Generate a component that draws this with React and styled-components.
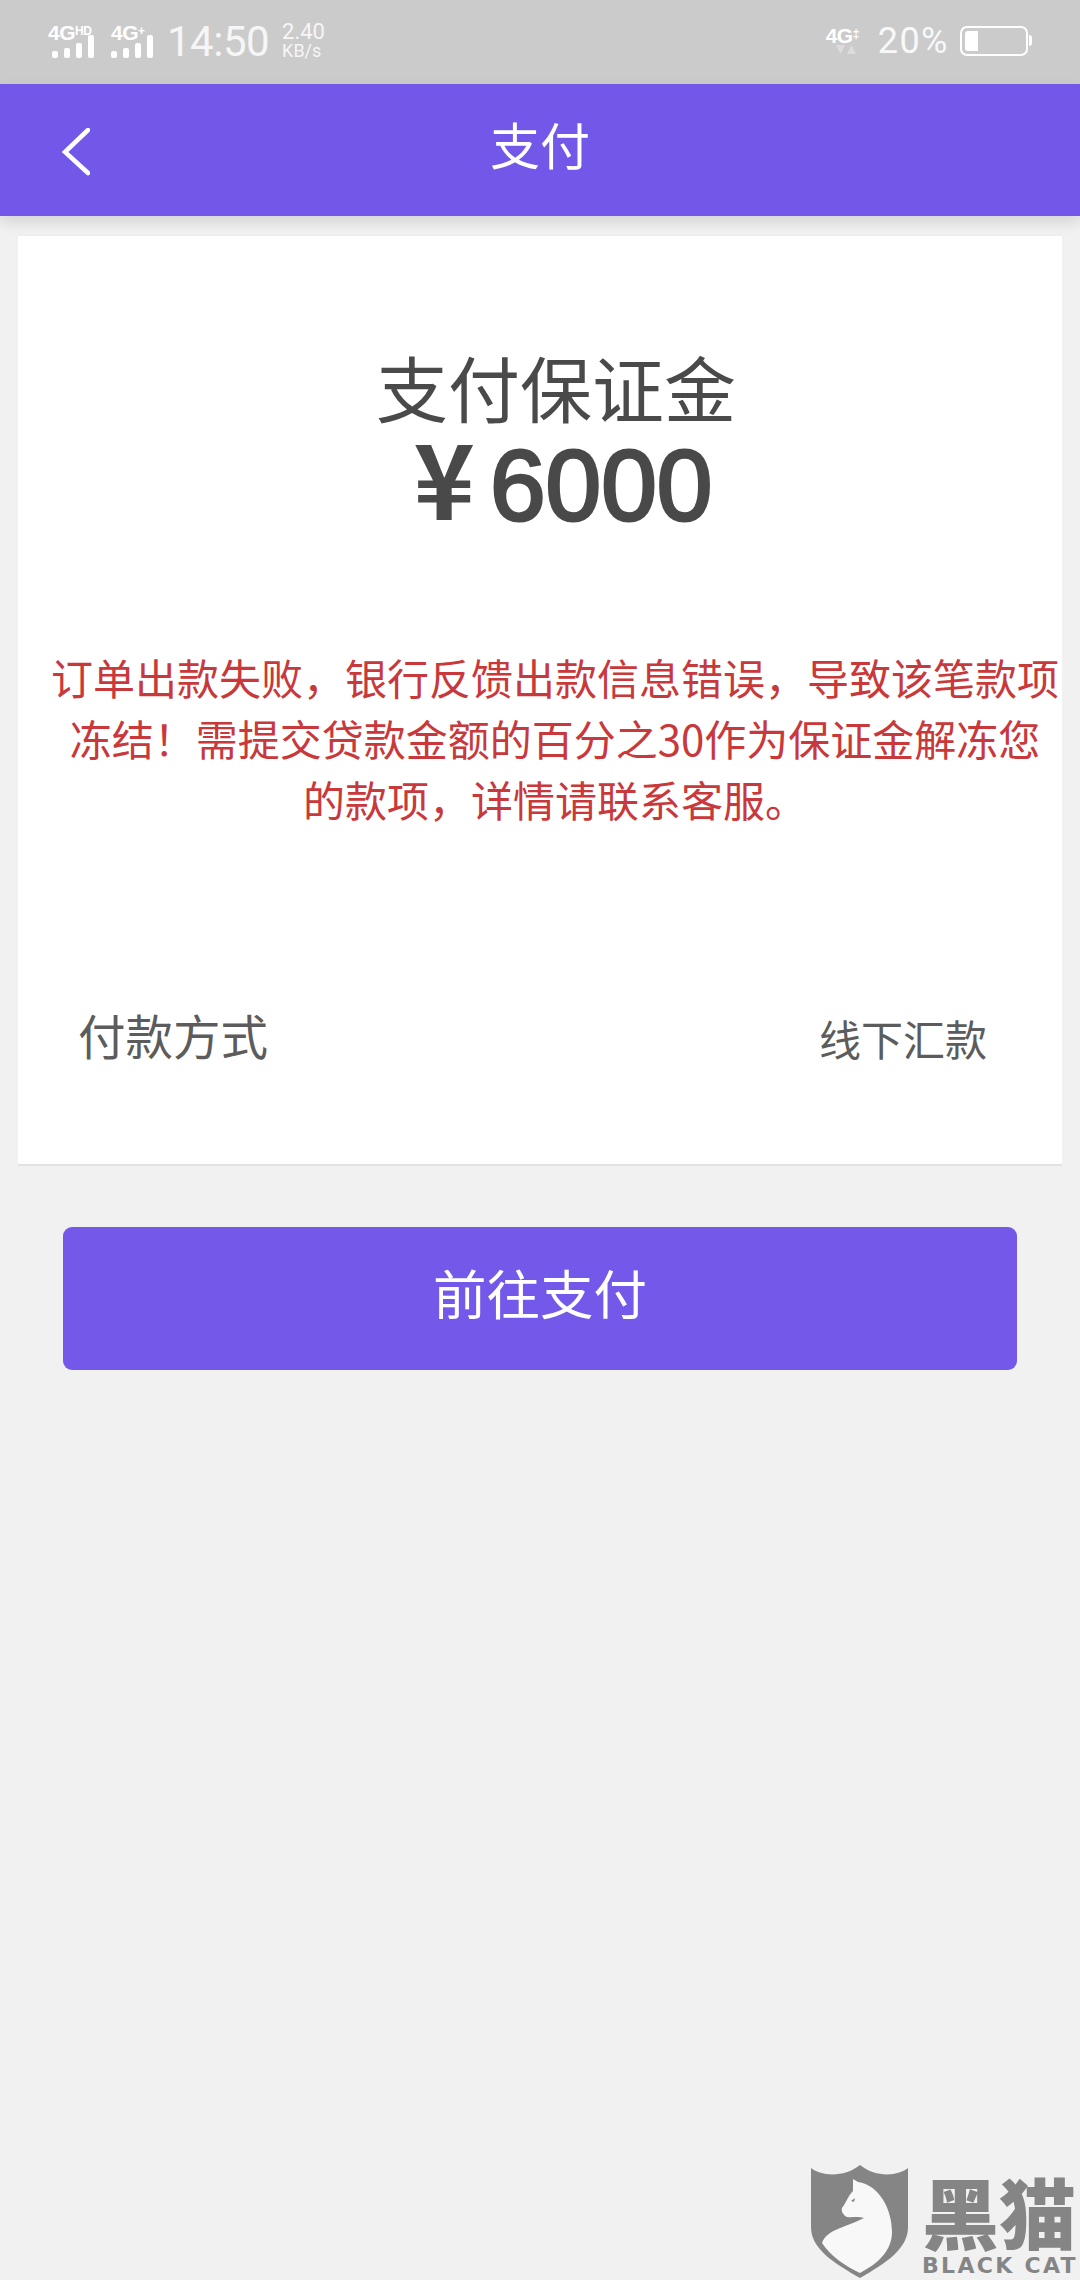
import React from "react";
import styled, { createGlobalStyle } from "styled-components";

const sans = `Roboto, "Liberation Sans", "Noto Sans CJK SC", sans-serif`;
const cjk = `"Noto Sans CJK SC", "Liberation Sans", sans-serif`;

const Global = createGlobalStyle`
  html, body {
    margin: 0;
    padding: 0;
    background: #f1f1f1;
  }
`;

const Page = styled.div`
  position: relative;
  width: 1080px;
  height: 2280px;
  overflow: hidden;
  background: #f1f1f1;
  font-family: ${cjk};
  text-spacing-trim: space-all;
`;

const StatusBar = styled.div`
  height: 84px;
  box-sizing: border-box;
  padding: 0 52px 2px 48px;
  background: #cbcbcb;
  color: #fff;
  display: flex;
  align-items: center;
  font-family: ${sans};
`;

const Signal = styled.div`
  display: flex;
  flex-direction: column;
  align-items: flex-start;
  width: ${(p) => p.$width}px;
  & svg {
    margin-left: ${(p) => p.$indent || 0}px;
  }
`;

const NetLabel = styled.span`
  font-family: "Liberation Sans", sans-serif;
  font-size: 21px;
  line-height: 17px;
  font-weight: 700;
  letter-spacing: -0.5px;
  white-space: nowrap;
  & sup {
    font-size: 12px;
    line-height: 0;
    vertical-align: 5px;
  }
`;

const BarsWrap = styled.div`
  margin-top: -6px;
  line-height: 0;
`;

const Clock = styled.span`
  font-size: 42px;
  font-weight: 400;
  margin-left: 6px;
  color: #f6f6f6;
  letter-spacing: -0.5px;
`;

const Speed = styled.div`
  margin-left: 13px;
  display: flex;
  flex-direction: column;
  font-size: 22px;
  line-height: 19px;
  color: #f6f6f6;
  & small {
    font-size: 18px;
    line-height: 19px;
  }
`;

const StatusRight = styled.div`
  margin-left: auto;
  display: flex;
  align-items: center;
`;

const Percent = styled.span`
  font-size: 36px;
  letter-spacing: 1.5px;
  margin: 0 11px 0 2px;
  color: #f8f8f8;
`;

const Battery = styled.div`
  width: 68px;
  height: 30px;
  box-sizing: border-box;
  border: 2.5px solid #fff;
  border-radius: 7px;
  padding: 3px;
  position: relative;
  &::before {
    content: "";
    display: block;
    width: 13px;
    height: 100%;
    background: #fff;
    border-radius: 3px 0 0 3px;
  }
  &::after {
    content: "";
    position: absolute;
    right: -6px;
    top: 7px;
    width: 3px;
    height: 11px;
    background: #fff;
    border-radius: 0 3px 3px 0;
  }
`;

const Header = styled.header`
  position: relative;
  height: 132px;
  background: #7257e9;
  color: #fff;
  display: flex;
  align-items: center;
  justify-content: center;
  box-shadow: 0 6px 14px rgba(0, 0, 0, 0.12);
`;

const Back = styled.svg`
  position: absolute;
  left: 60px;
  top: 44px;
`;

const HeaderTitle = styled.h1`
  margin: 0 0 14px;
  font-size: 50px;
  font-weight: 400;
  line-height: 60px;
`;

const Card = styled.section`
  margin: 19px 18px 0;
  height: 931px;
  box-sizing: border-box;
  background: #fff;
  border-bottom: 2px solid #e2e2e2;
  border-top: 1px solid #ececec;
  display: flex;
  flex-direction: column;
  align-items: center;
`;

const Title = styled.div`
  margin-top: 107px;
  font-size: 72px;
  line-height: 86px;
  color: #4a4a4a;
  text-align: center;
  width: 100%;
  padding-left: 32px;
  box-sizing: border-box;
`;

const Amount = styled.div`
  display: flex;
  align-items: baseline;
  justify-content: center;
  margin-top: -4px;
  font-family: "Liberation Sans", sans-serif;
  font-size: 100px;
  line-height: 100px;
  -webkit-text-stroke: 3px #494949;
  color: #494949;
  padding-left: 46px;
  & span {
    font-family: ${cjk};
    font-weight: 700;
    -webkit-text-stroke: 0;
    margin-right: 15px;
    font-size: 104px;
  }
`;

const Notice = styled.p`
  margin: 111px 0 0 30px;
  font-size: 42px;
  line-height: 61px;
  color: #c9383b;
  text-align: center;
  white-space: nowrap;
`;

const PayRow = styled.div`
  margin-top: 171px;
  align-self: stretch;
  padding: 0 75px 0 60px;
  display: flex;
  align-items: center;
  justify-content: space-between;
  color: #5c5c5c;
`;

const PayLabel = styled.span`
  font-size: 47.5px;
`;

const PayValue = styled.span`
  font-size: 42px;
  padding-top: 5px;
`;

const PayButton = styled.button`
  display: block;
  margin: 61px 0 0 63px;
  width: 954px;
  height: 143px;
  border: 0;
  border-radius: 9px;
  background: #7358ea;
  color: #fff;
  font-family: ${cjk};
  font-size: 53.5px;
  padding: 0 0 14px;
`;

const Watermark = styled.div`
  position: absolute;
  left: 811px;
  top: 2165px;
  display: flex;
  gap: 14px;
  color: #858585;
`;

const Brand = styled.div`
  display: flex;
  flex-direction: column;
  align-items: flex-start;
  margin-top: 4px;
`;

const BrandName = styled.div`
  font-size: 77px;
  line-height: 84px;
  font-weight: 900;
  white-space: nowrap;
`;

const BrandEn = styled.div`
  font-family: "DejaVu Sans", sans-serif;
  font-size: 22px;
  line-height: 22px;
  font-weight: 700;
  letter-spacing: 2.3px;
  white-space: nowrap;
  margin-top: 2px;
`;

function Bars() {
  const heights = [7, 10, 15, 23];
  return (
    <BarsWrap>
      <svg width="44" height="23" viewBox="0 0 44 23" fill="#fff">
        {heights.map((h, i) => (
          <rect key={i} x={i * 12} y={23 - h} width="6" height={h} rx="2" />
        ))}
      </svg>
    </BarsWrap>
  );
}

function Shield() {
  return (
    <svg width="97" height="113" viewBox="0 0 97 113">
      <path
        fill="#858585"
        d="M0 3 C8 10 32 14 49 0 C66 14 89 10 97 3 L97 62 C97 84 75 98 49 113 C23 98 0 84 0 62 Z"
      />
      <path
        fill="#f8f8f8"
        d="M42 14 L47 17 C68 20 81 44 81 67 C81 85 68 98 49 108 C36 102 20 92 11 78 C16 64 36 62 53 53 C47 51 41 53 36 52 C32 50 30 46 31 43 C35 38 37 31 42 26 Z"
      />
      <path fill="#858585" d="M40 36 L44 33 L43 37 Z" />
    </svg>
  );
}

export default function App() {
  return (
    <Page>
      <Global />
      <StatusBar>
        <Signal $width={63} $indent={4}>
          <NetLabel>
            4G<sup>HD</sup>
          </NetLabel>
          <Bars />
        </Signal>
        <Signal $width={50}>
          <NetLabel>
            4G<sup>+</sup>
          </NetLabel>
          <Bars />
        </Signal>
        <Clock>14:50</Clock>
        <Speed>
          <span>2.40</span>
          <small>KB/s</small>
        </Speed>
        <StatusRight>
          <Signal $width={50} $indent={9}>
            <NetLabel>
              4G<sup>‡</sup>
            </NetLabel>
            <svg width="22" height="11" viewBox="0 0 22 11" fill="#dcdcdc">
              <path d="M1 1 H10 L5.5 10 Z M12 10 H21 L16.5 1 Z" />
            </svg>
          </Signal>
          <Percent>20%</Percent>
          <Battery />
        </StatusRight>
      </StatusBar>
      <Header>
        <Back width="30" height="48" viewBox="0 0 30 48" fill="none">
          <path d="M28 2 L5 24 L28 45" stroke="#fff" strokeWidth="4.5" strokeLinecap="round" />
        </Back>
        <HeaderTitle>支付</HeaderTitle>
      </Header>
      <Card>
        <Title>支付保证金</Title>
        <Amount>
          <span>¥</span>6000
        </Amount>
        <Notice>
          订单出款失败，银行反馈出款信息错误，导致该笔款项
          <br />
          冻结！需提交贷款金额的百分之30作为保证金解冻您
          <br />
          的款项，详情请联系客服。
        </Notice>
        <PayRow>
          <PayLabel>付款方式</PayLabel>
          <PayValue>线下汇款</PayValue>
        </PayRow>
      </Card>
      <PayButton>前往支付</PayButton>
      <Watermark>
        <Shield />
        <Brand>
          <BrandName>黑猫</BrandName>
          <BrandEn>BLACK CAT</BrandEn>
        </Brand>
      </Watermark>
    </Page>
  );
}
